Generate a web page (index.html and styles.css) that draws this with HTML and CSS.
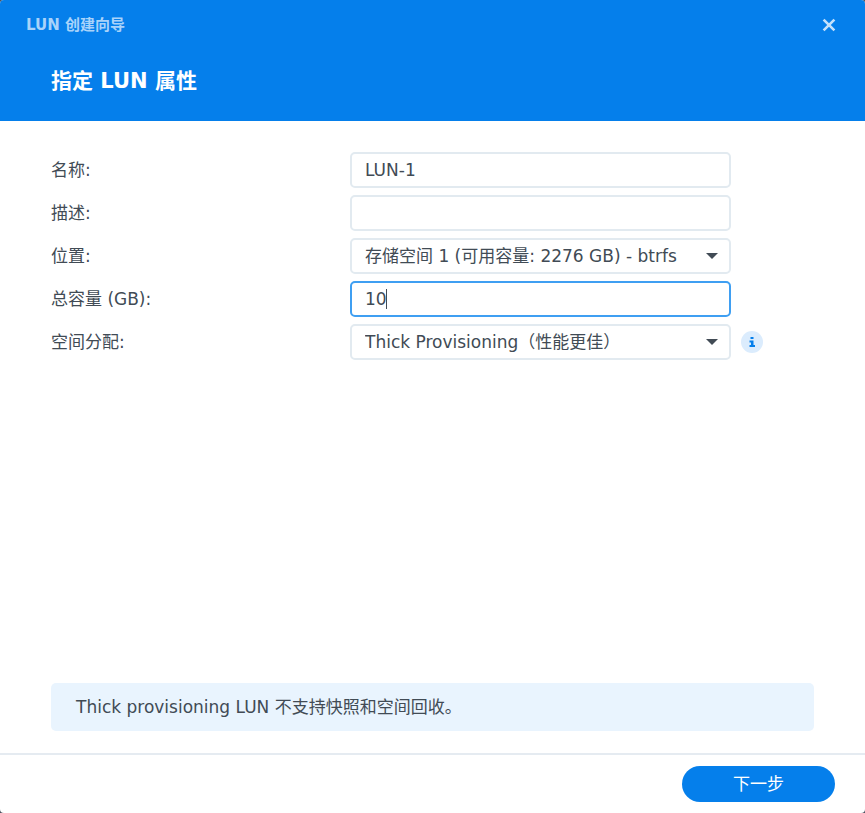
FILE: index.html
```html
<!DOCTYPE html>
<html lang="zh-CN">
<head>
<meta charset="utf-8">
<meta name="viewport" content="width=device-width, initial-scale=1">
<title>LUN 创建向导</title>
<link rel="stylesheet" href="styles.css">
</head>
<body>
<main class="wizard">
  <header class="wizard-header">
    <div class="title-bar">
      <span class="window-title">LUN 创建向导</span>
      <button class="close" type="button" aria-label="关闭">
        <svg width="14" height="14" viewBox="0 0 14 14" aria-hidden="true"><path d="M1.600 1.600 12.400 12.400M12.400 1.600 1.600 12.400" fill="none" stroke="currentColor" stroke-width="2.600"/></svg>
      </button>
    </div>
    <h1 class="step-title">指定 LUN 属性</h1>
  </header>
  <form class="wizard-form" id="lun-form">
    <div class="row">
      <label for="name">名称:</label>
      <input class="field" id="name" type="text" value="LUN-1">
    </div>
    <div class="row">
      <label for="description">描述:</label>
      <input class="field" id="description" type="text">
    </div>
    <div class="row">
      <label for="location">位置:</label>
      <select class="field select" id="location"><option>存储空间 1 (可用容量: 2276 GB) - btrfs</option></select>
    </div>
    <div class="row">
      <label for="capacity">总容量 (GB):</label>
      <input class="field active" id="capacity" type="text" inputmode="numeric" value="10">
    </div>
    <div class="row">
      <label for="allocation">空间分配:</label>
      <select class="field select" id="allocation"><option>Thick Provisioning（性能更佳）</option></select>
      <button class="info" type="button" aria-label="信息">
        <svg width="22" height="22" viewBox="0 0 22 22" aria-hidden="true"><path d="M9.500 6h3v2h-3zM8.500 9.500h4V14H14v2H8.500v-2H10v-2.500H8.500z" fill="currentColor"/></svg>
      </button>
    </div>
  </form>
  <p class="notice">Thick provisioning LUN 不支持快照和空间回收。</p>
  <footer class="wizard-footer">
    <button class="next" type="submit" form="lun-form">下一步</button>
  </footer>
</main>
</body>
</html>
```
FILE: styles.css
```css
* {
  box-sizing: border-box;
}

body {
  margin: 0;
  background: #4c5361;
  color: #414b55;
  font: 17px/24px "DejaVu Sans", "Noto Sans CJK SC", sans-serif;
}

button,
input,
select {
  font: inherit;
  color: inherit;
}

button {
  padding: 0;
  border: 0;
  cursor: pointer;
}

.wizard {
  display: flex;
  flex-direction: column;
  min-height: 100vh;
  overflow: hidden;
  border-radius: 4px;
  background: #fff;
}

.wizard-header {
  padding: 13px 26px 24px;
  background: #057feb;
  color: #fff;
}

.title-bar {
  display: flex;
  align-items: center;
  justify-content: space-between;
}

.window-title {
  color: #a9d3fa;
  font-size: 15px;
  font-weight: 700;
}

.close {
  display: grid;
  place-items: center;
  width: 20px;
  height: 24px;
  background: none;
  color: #c3e0fb;
}

.step-title {
  margin: 28px 0 0;
  padding: 0 25px;
  font-size: 21px;
  line-height: 32px;
}

.wizard-form {
  display: grid;
  gap: 7px;
  padding: 31px 51px;
}

.row {
  display: grid;
  grid-template-columns: 299fr 381fr 83fr;
  align-items: center;
}

.field {
  width: 100%;
  height: 36px;
  padding: 0 13px;
  border: 2px solid #e2eaf0;
  border-radius: 5px;
  outline: 0;
  background: #fff;
}

.select {
  appearance: none;
  padding-right: 36px;
  background: #fff url("data:image/svg+xml,%3Csvg xmlns='http://www.w3.org/2000/svg' width='12' height='6'%3E%3Cpath d='M0 0h12L6 6z' fill='%23414b55'/%3E%3C/svg%3E") no-repeat right 11px center / 12px 6px;
}

/* Focused state with the insertion point after the value */
.active {
  border-color: #3f9ff2;
  background: #fff linear-gradient(#414b55, #414b55) no-repeat 34px center / 1px 20px;
}

.info {
  width: 22px;
  height: 22px;
  margin-left: 10px;
  border-radius: 50%;
  background: #dbecfd;
  color: #057feb;
}

.info svg {
  display: block;
}

.notice {
  margin: auto 51px 22px;
  padding: 12px 25px;
  border-radius: 5px;
  background: #e9f4fe;
}

.wizard-footer {
  display: flex;
  justify-content: flex-end;
  padding: 11px 30px;
  border-top: 2px solid #e5ebf1;
}

.next {
  width: 153px;
  height: 36px;
  border-radius: 18px;
  background: #057feb;
  color: #fff;
}
```
